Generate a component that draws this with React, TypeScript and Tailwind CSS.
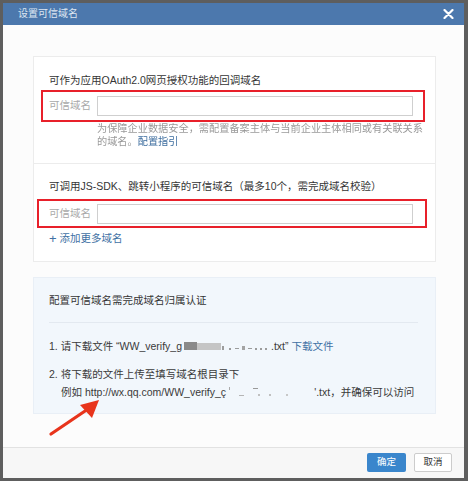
import React from "react";

const FONT = {
  fontFamily: '"Liberation Sans", "Noto Sans CJK SC", sans-serif',
};

export default function App() {
  return (
    <div
      className="w-[468px] h-[481px] bg-[#5e5e5e] pt-[3px] pl-[3px] overflow-hidden"
      style={FONT}
    >
      <div className="relative w-[461px] h-[475px] bg-[#fcfcfc] flex flex-col">
        {/* HEADER */}
        <div className="h-[22px] bg-[#4c78ad] flex items-center justify-between pl-[15px] pr-[10px]">
          <span className="text-[10px] text-[#dde6f1] leading-none">设置可信域名</span>
          <svg width="11" height="10" viewBox="0 0 11 10" className="mb-[1px]">
            <path d="M1.5 1 L9.5 9 M9.5 1 L1.5 9" stroke="#ffffff" strokeWidth="2.2" strokeLinecap="round" />
          </svg>
        </div>

        {/* BODY */}
        <div className="flex-1 pt-[31px] px-[30px]">
          <div className="w-[403px] bg-white border border-[#ececec]">
            {/* OAuth domain */}
            <div className="pt-[16px] pb-[15px] pl-[15px] border-b border-[#ececec]">
              <div className="text-[10.5px] leading-[14px] text-[#353535]">
                可作为应用OAuth2.0网页授权功能的回调域名
              </div>
              <div className="mt-[3px] -ml-[8px] w-[384px] h-[32px] border-2 border-[#e8202a] flex items-center pl-[6px]">
                <span className="text-[10.5px] text-[#a9a9a9] w-[48px]">可信域名</span>
                <div className="w-[316px] h-[20px] border border-[#cfcfcf] bg-white" />
              </div>
              <div className="pl-[48px] text-[10.2px] leading-[13px] text-[#9a9a9a] blur-[0.3px]">
                <div>为保障企业数据安全，需配置备案主体与当前企业主体相同或有关联关系</div>
                <div>
                  的域名。<span className="text-[#3e6e9f]">配置指引</span>
                </div>
              </div>
            </div>

            {/* JS-SDK domain */}
            <div className="pt-[15px] pb-[16px] pl-[15px]">
              <div className="text-[10.5px] leading-[14px] text-[#353535]">
                可调用JS-SDK、跳转小程序的可信域名（最多10个，需完成域名校验）
              </div>
              <div className="mt-[6px] -ml-[12px] w-[390px] h-[29px] border-2 border-[#e8202a] flex items-center pl-[10px]">
                <span className="text-[10.5px] text-[#a9a9a9] w-[48px]">可信域名</span>
                <div className="w-[316px] h-[20px] border border-[#cfcfcf] bg-white" />
              </div>
              <div className="mt-[3px] text-[10.5px] leading-[14px] text-[#4171a4] flex items-center gap-[3px]">
                <span className="text-[13px] leading-none font-light">+</span>
                <span>添加更多域名</span>
              </div>
            </div>
          </div>

          {/* DOMAIN OWNERSHIP */}
          <div className="mt-[15px] w-[403px] h-[137px] bg-[#f2f7fc] border border-[#e9eff6] px-[15px] pt-[15px]">
            <div className="text-[10.5px] leading-[14px] text-[#353535]">配置可信域名需完成域名归属认证</div>
            <div className="mt-[15px] border-t border-[#e3e9f0] w-[369px]" />
            <div className="mt-[16px] text-[10.5px] leading-[14px] text-[#3a3a3a] flex items-center whitespace-nowrap">
              <span>1. 请下载文件 “WW_verify_g</span>
              <span className="relative w-[89px] h-[14px] overflow-hidden">
                <span className="absolute left-[2px] top-[3px] w-[13px] h-[8px] bg-[#8a8a8a] blur-[0.5px]" />
                <span className="absolute left-[15px] top-[4px] w-[24px] h-[7px] bg-[#c5c5c5] blur-[0.5px]" />
                <span className="absolute left-[40px] top-[7px] w-[2px] h-[4px] bg-[#9c9c9c]" />
                <span className="absolute left-[47px] top-[9px] w-[2px] h-[2px] bg-[#9c9c9c]" />
                <span className="absolute left-[53px] top-[9px] w-[4px] h-[1px] bg-[#9c9c9c]" />
                <span className="absolute left-[60px] top-[7px] w-[3px] h-[4px] bg-[#a4a4a4]" />
                <span className="absolute left-[66px] top-[9px] w-[4px] h-[1px] bg-[#9c9c9c]" />
                <span className="absolute left-[73px] top-[9px] w-[2px] h-[2px] bg-[#9c9c9c]" />
                <span className="absolute left-[78px] top-[9px] w-[2px] h-[2px] bg-[#9c9c9c]" />
                <span className="absolute left-[83px] top-[9px] w-[2px] h-[2px] bg-[#9c9c9c]" />
              </span>
              <span>.txt”</span>
              <span className="ml-[3px] text-[#4171a4]">下载文件</span>
            </div>
            <div className="mt-[12px] text-[10.5px] leading-[18px] text-[#3a3a3a] whitespace-nowrap">
              <div>2. 将下载的文件上传至填写域名根目录下</div>
              <div className="pl-[12px] flex items-center">
                <span>例如 http://wx.qq.com/WW_verify_ç</span>
                <span className="relative w-[88px] h-[14px] overflow-hidden">
                  <span className="absolute left-[3px] top-[2px] w-[1px] h-[3px] bg-[#aaaaaa]" />
                  <span className="absolute left-[13px] top-[10px] w-[5px] h-[1px] bg-[#b5b5b5]" />
                  <span className="absolute left-[27px] top-[3px] w-[5px] h-[1px] bg-[#9a9a9a]" />
                  <span className="absolute left-[32px] top-[9px] w-[2px] h-[2px] bg-[#c0c0c0]" />
                  <span className="absolute left-[43px] top-[9px] w-[2px] h-[2px] bg-[#c0c0c0]" />
                  <span className="absolute left-[60px] top-[9px] w-[2px] h-[2px] bg-[#c8c8c8]" />
                </span>
                <span>'.txt，并确保可以访问</span>
              </div>
            </div>
          </div>
        </div>

        {/* FOOTER */}
        <div className="h-[31px] border-t border-[#e2e2e2] bg-[#f7f7f7] flex items-center justify-end gap-[8px] pr-[12px] pb-[1px]">
          <button className="w-[39px] h-[19px] bg-[#3a86cc] text-white text-[9.5px] rounded-[2px]">确定</button>
          <button className="w-[38px] h-[19px] bg-white border border-[#cccccc] text-[#333] text-[9.5px] rounded-[2px]">取消</button>
        </div>

        {/* ARROW ANNOTATION */}
        <svg
          className="absolute left-[45px] top-[393px]"
          width="56"
          height="42"
          viewBox="0 0 56 42"
        >
          <path d="M3 38 L40 13" stroke="#e8341c" strokeWidth="3.2" strokeLinecap="round" />
          <path d="M51 4 L32 9 L44 22 Z" fill="#e8341c" />
        </svg>
      </div>
    </div>
  );
}
